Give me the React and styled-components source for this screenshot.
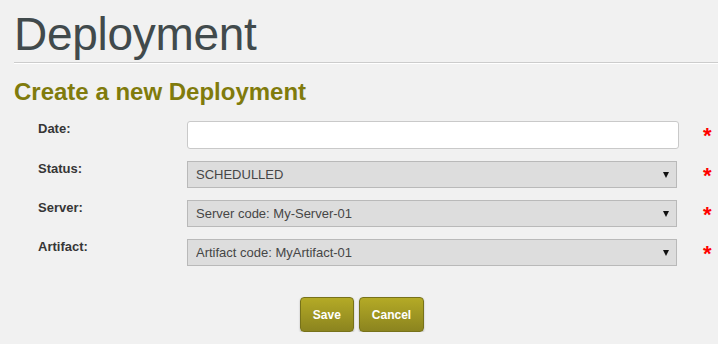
import React from "react";
import styled, { createGlobalStyle } from "styled-components";

const GlobalStyle = createGlobalStyle`
  body {
    margin: 0;
    background: #f1f1f1;
    font-family: "Liberation Sans", Arial, sans-serif;
  }
`;

const Page = styled.div`
  padding: 0 0 0 14px;
  width: 704px;
`;

const Title = styled.h1`
  margin: 11px 0 5px 0;
  font-size: 46px;
  line-height: 46px;
  font-weight: 400;
  color: #414a4c;
  letter-spacing: -0.3px;
`;

const Rule = styled.div`
  height: 1px;
  background: #cccccc;
  border-bottom: 1px solid #ffffff;
`;

const SubTitle = styled.h2`
  margin: 16px 0 17px 0;
  font-size: 24px;
  line-height: 24px;
  font-weight: 700;
  color: #807b0c;
`;

const Form = styled.form`
  display: flex;
  flex-direction: column;
  gap: 12px;
  padding-left: 24px;
`;

const Row = styled.div`
  display: grid;
  grid-template-columns: 149px 492px 24px 12px;
  align-items: start;
`;

const Label = styled.label`
  font-size: 13px;
  line-height: 16px;
  font-weight: 700;
  color: #363636;
`;

const TextInput = styled.input`
  box-sizing: border-box;
  width: 492px;
  height: 28px;
  margin: 0;
  border: 1px solid #c9c9c9;
  border-radius: 3px;
  background: #ffffff;
  font-family: inherit;
  font-size: 13px;
  padding: 0 8px;
  outline: none;
`;

const SelectWrap = styled.div`
  position: relative;
  width: 490px;
  height: 27px;
`;

const Select = styled.select`
  box-sizing: border-box;
  width: 100%;
  height: 27px;
  margin: 0;
  appearance: none;
  -webkit-appearance: none;
  border: 1px solid #b9b9b9;
  border-radius: 0;
  background: #dddddd;
  color: #464646;
  font-family: inherit;
  font-size: 13px;
  padding: 0 24px 0 8px;
  outline: none;
`;

const Arrow = styled.span`
  position: absolute;
  right: 8px;
  top: 11px;
  width: 0;
  height: 0;
  border-left: 3px solid transparent;
  border-right: 3px solid transparent;
  border-top: 6px solid #111111;
  pointer-events: none;
`;

const Required = styled.span`
  grid-column: 4;
  color: #ff0000;
  font-size: 22px;
  font-weight: 700;
  line-height: 24px;
  height: 24px;
  padding-top: 3px;
`;

const Actions = styled.div`
  display: flex;
  justify-content: center;
  gap: 5px;
  margin-top: 31px;
  padding-right: 8px;
`;

const Button = styled.button`
  box-sizing: border-box;
  height: 35px;
  padding: 0 12px;
  border: 1px solid #77721a;
  border-radius: 4px;
  background: linear-gradient(to bottom, #b4aa26, #8b841f);
  color: #ffffff;
  font-family: inherit;
  font-size: 12px;
  font-weight: 700;
  box-shadow: 0 1px 2px rgba(0, 0, 0, 0.25);
  cursor: pointer;
`;

const fields = [
  { label: "Status:", value: "SCHEDULLED" },
  { label: "Server:", value: "Server code: My-Server-01" },
  { label: "Artifact:", value: "Artifact code: MyArtifact-01" },
];

const App = () => {
  return (
    <Page>
      <GlobalStyle />
      <Title>Deployment</Title>
      <Rule />
      <SubTitle>Create a new Deployment</SubTitle>
      <Form onSubmit={(e) => e.preventDefault()}>
        <Row>
          <Label>Date:</Label>
          <TextInput type="text" />
          <Required>*</Required>
        </Row>
        {fields.map((f) => (
          <Row key={f.label}>
            <Label>{f.label}</Label>
            <SelectWrap>
              <Select defaultValue={f.value}>
                <option>{f.value}</option>
              </Select>
              <Arrow />
            </SelectWrap>
            <Required>*</Required>
          </Row>
        ))}
      </Form>
      <Actions>
        <Button>Save</Button>
        <Button>Cancel</Button>
      </Actions>
    </Page>
  );
};

export default App;
